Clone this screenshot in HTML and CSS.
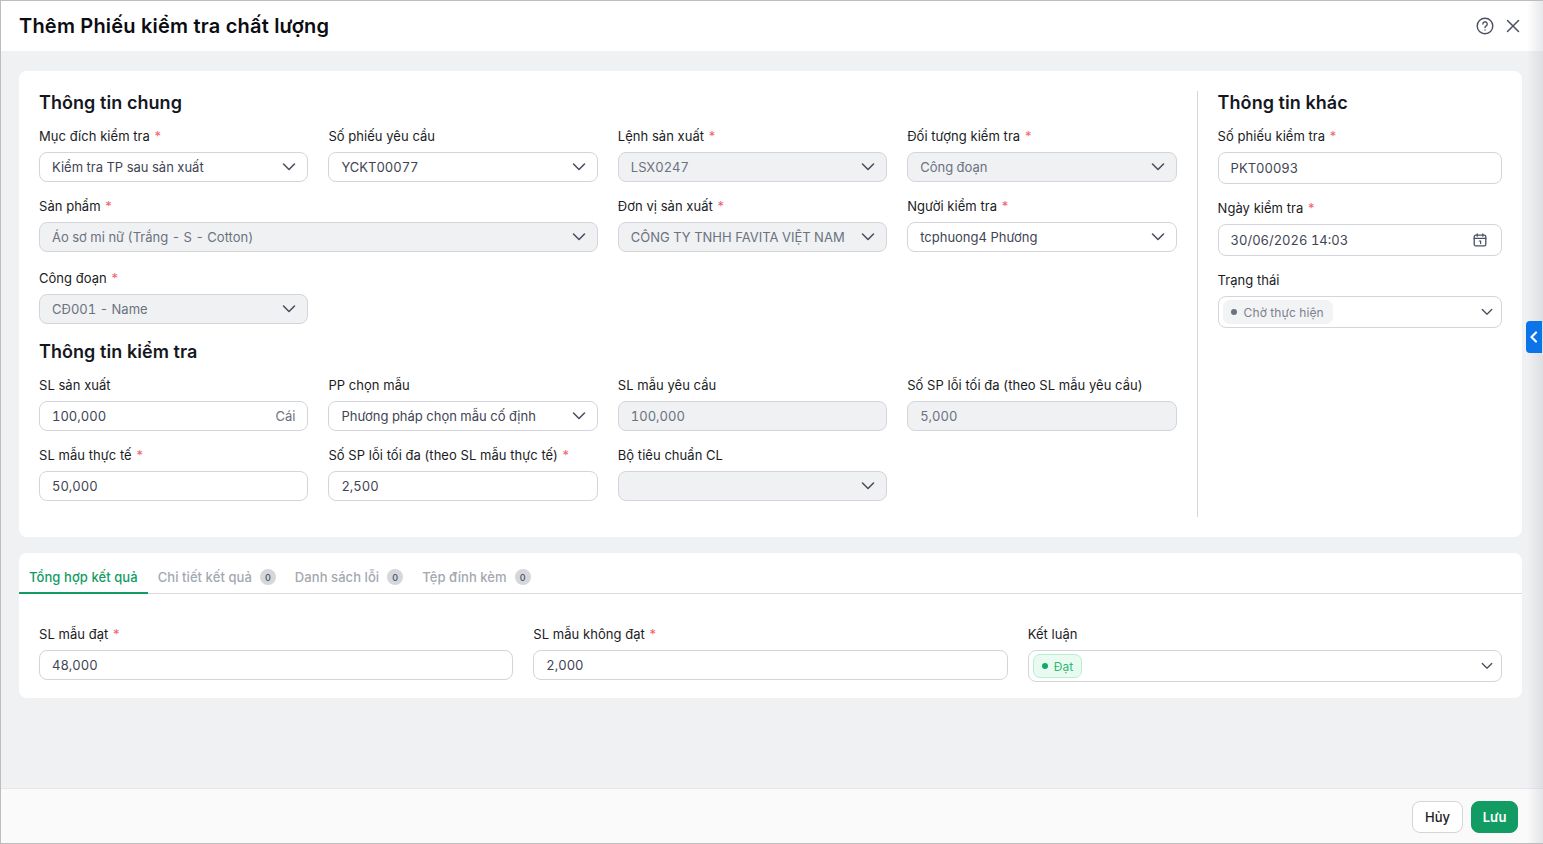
FILE: index.html
```html
<!DOCTYPE html>
<html lang="vi">
<head>
    <meta charset="UTF-8">
    <meta name="viewport" content="width=device-width, initial-scale=1.0">
    <title>Thêm Phiếu kiểm tra chất lượng</title>
    <link rel="stylesheet" href="styles.css">
</head>
<body>

<svg class="icon-defs" width="0" height="0">
    <symbol id="chev" viewBox="0 0 14 14"><path d="M1.5 4l5.5 5.5L12.5 4" fill="none" stroke="currentColor" stroke-width="1.6" stroke-linecap="round" stroke-linejoin="round"/></symbol>
</svg>

<div class="dialog">
    <header class="dialog-header">
        <h1>Thêm Phiếu kiểm tra chất lượng</h1>
        <div class="header-actions">
            <svg class="icon-help" width="18" height="18" viewBox="0 0 18 18" fill="none" stroke="currentColor" stroke-width="1.4" stroke-linecap="round">
                <circle cx="9" cy="9" r="7.8"/>
                <path d="M6.9 7a2.15 2.15 0 1 1 3.3 1.8c-.8.5-1.2.9-1.2 1.8"/>
                <path d="M9 13v.1"/>
            </svg>
            <svg class="icon-close" width="14" height="14" viewBox="0 0 14 14" fill="none" stroke="currentColor" stroke-width="1.5" stroke-linecap="round">
                <path d="M1.5 1.5l11 11M12.5 1.5l-11 11"/>
            </svg>
        </div>
    </header>

    <main class="dialog-body">
        <section class="card card-top">
            <div class="col-main">
                <h2>Thông tin chung</h2>
                <div class="grid-4">
                    <div class="field">
                        <label>Mục đích kiểm tra <em>*</em></label>
                        <div class="control select"><span>Kiểm tra TP sau sản xuất</span><svg class="chev"><use href="#chev"/></svg></div>
                    </div>
                    <div class="field">
                        <label>Số phiếu yêu cầu</label>
                        <div class="control select"><span>YCKT00077</span><svg class="chev"><use href="#chev"/></svg></div>
                    </div>
                    <div class="field">
                        <label>Lệnh sản xuất <em>*</em></label>
                        <div class="control select disabled"><span>LSX0247</span><svg class="chev"><use href="#chev"/></svg></div>
                    </div>
                    <div class="field">
                        <label>Đối tượng kiểm tra <em>*</em></label>
                        <div class="control select disabled"><span>Công đoạn</span><svg class="chev"><use href="#chev"/></svg></div>
                    </div>

                    <div class="field span-2 row-tall">
                        <label>Sản phẩm <em>*</em></label>
                        <div class="control select disabled"><span>Áo sơ mi nữ (Trắng - S - Cotton)</span><svg class="chev"><use href="#chev"/></svg></div>
                    </div>
                    <div class="field row-tall">
                        <label>Đơn vị sản xuất <em>*</em></label>
                        <div class="control select disabled"><span>CÔNG TY TNHH FAVITA VIỆT NAM</span><svg class="chev"><use href="#chev"/></svg></div>
                    </div>
                    <div class="field row-tall">
                        <label>Người kiểm tra <em>*</em></label>
                        <div class="control select"><span>tcphuong4 Phương</span><svg class="chev"><use href="#chev"/></svg></div>
                    </div>

                    <div class="field">
                        <label>Công đoạn <em>*</em></label>
                        <div class="control select disabled"><span>CĐ001 - Name</span><svg class="chev"><use href="#chev"/></svg></div>
                    </div>
                </div>

                <h2 class="h2-next">Thông tin kiểm tra</h2>
                <div class="grid-4">
                    <div class="field">
                        <label>SL sản xuất</label>
                        <div class="control"><span>100,000</span><span class="unit">Cái</span></div>
                    </div>
                    <div class="field">
                        <label>PP chọn mẫu</label>
                        <div class="control select"><span>Phương pháp chọn mẫu cố định</span><svg class="chev"><use href="#chev"/></svg></div>
                    </div>
                    <div class="field">
                        <label>SL mẫu yêu cầu</label>
                        <div class="control disabled"><span>100,000</span></div>
                    </div>
                    <div class="field">
                        <label>Số SP lỗi tối đa (theo SL mẫu yêu cầu)</label>
                        <div class="control disabled"><span>5,000</span></div>
                    </div>

                    <div class="field">
                        <label>SL mẫu thực tế <em>*</em></label>
                        <div class="control"><span>50,000</span></div>
                    </div>
                    <div class="field">
                        <label>Số SP lỗi tối đa (theo SL mẫu thực tế) <em>*</em></label>
                        <div class="control"><span>2,500</span></div>
                    </div>
                    <div class="field">
                        <label>Bộ tiêu chuẩn CL</label>
                        <div class="control select disabled"><span></span><svg class="chev"><use href="#chev"/></svg></div>
                    </div>
                </div>
            </div>

            <aside class="col-side">
                <h2>Thông tin khác</h2>
                <div class="field">
                    <label>Số phiếu kiểm tra <em>*</em></label>
                    <div class="control tall"><span>PKT00093</span></div>
                </div>
                <div class="field">
                    <label>Ngày kiểm tra <em>*</em></label>
                    <div class="control tall date">
                        <span>30/06/2026 14:03</span>
                        <svg class="icon-cal" width="14" height="14" viewBox="0 0 14 14" fill="none" stroke="currentColor" stroke-width="1.3" stroke-linecap="round">
                            <rect x="1.2" y="2.2" width="11.6" height="10.6" rx="1.6"/>
                            <path d="M1.2 5.4h11.6M4.2 1v2.2M9.8 1v2.2"/>
                            <path d="M6.2 8h1.4v2.6" stroke-width="1.2"/>
                        </svg>
                    </div>
                </div>
                <div class="field">
                    <label>Trạng thái</label>
                    <div class="control tall with-tag">
                        <span class="tag tag-grey"><i></i>Chờ thực hiện</span>
                        <svg class="chev"><use href="#chev"/></svg>
                    </div>
                </div>
            </aside>
        </section>

        <section class="card card-tabs">
            <nav class="tabs">
                <a class="tab active">Tổng hợp kết quả</a>
                <a class="tab">Chi tiết kết quả <b>0</b></a>
                <a class="tab">Danh sách lỗi <b>0</b></a>
                <a class="tab">Tệp đính kèm <b>0</b></a>
            </nav>
            <div class="grid-3">
                <div class="field">
                    <label>SL mẫu đạt <em>*</em></label>
                    <div class="control"><span>48,000</span></div>
                </div>
                <div class="field">
                    <label>SL mẫu không đạt <em>*</em></label>
                    <div class="control"><span>2,000</span></div>
                </div>
                <div class="field">
                    <label>Kết luận</label>
                    <div class="control tall with-tag">
                        <span class="tag tag-green"><i></i>Đạt</span>
                        <svg class="chev"><use href="#chev"/></svg>
                    </div>
                </div>
            </div>
        </section>
    </main>

    <footer class="dialog-footer">
        <button class="btn">Hủy</button>
        <button class="btn btn-primary">Lưu</button>
    </footer>

    <div class="edge-shadow"></div>
    <button class="side-toggle">
        <svg width="10" height="12" viewBox="0 0 10 12" fill="none" stroke="currentColor" stroke-width="2.2" stroke-linecap="round" stroke-linejoin="round"><path d="M7 1.5L2.5 6 7 10.5"/></svg>
    </button>
</div>

</body>
</html>
```

FILE: styles.css
```css
* {
    box-sizing: border-box;
}

body {
    margin: 0;
    font-family: Inter, 'Noto Sans', sans-serif;
    font-size: 13px;
    color: #1a1c24;
}

.icon-defs {
    position: absolute;
}

.dialog {
    position: relative;
    display: flex;
    flex-direction: column;
    height: 844px;
    overflow: hidden;
    border: 1px solid #bdbdbd;
    border-right: 0;
    background-color: #f0f1f3;
}

.dialog-header {
    display: flex;
    align-items: center;
    justify-content: space-between;
    height: 50px;
    padding: 0 23px 0 18px;
    background-color: white;
}

h1 {
    margin: 0;
    font-size: 20px;
    font-weight: 600;
    letter-spacing: 0.2px;
    color: #0c0d12;
}

.header-actions {
    display: flex;
    align-items: center;
    gap: 12px;
    color: #4b5160;
}

.dialog-body {
    flex: 1;
    padding: 20px 21px 0 18px;
}

.card {
    background-color: white;
    border-radius: 8px;
}

.card-top {
    display: flex;
    height: 466px;
    padding: 20px;
}

.card-tabs {
    margin-top: 16px;
}

.col-main {
    width: 1137.6px;
    flex: none;
}

.col-side {
    flex: 1;
    margin-left: 20px;
    padding-left: 20px;
    border-left: 1px solid #d5d7dc;
}

.col-side .field + .field {
    margin-top: 14px;
}

h2 {
    margin: 0 0 13px;
    height: 22px;
    line-height: 24px;
    font-size: 18px;
    font-weight: 600;
    letter-spacing: 0.06px;
    color: #15171f;
}

.h2-next {
    margin-top: 16px;
}

.grid-4 {
    display: grid;
    grid-template-columns: repeat(4, 1fr);
    gap: 14px 20px;
}

.grid-3 {
    display: grid;
    grid-template-columns: repeat(3, 1fr);
    gap: 20px;
    padding: 30px 20px 16px;
}

.span-2 {
    grid-column: span 2;
}

.row-tall {
    margin-bottom: 2px;
}

label {
    display: block;
    height: 20px;
    margin-bottom: 6px;
    line-height: 21px;
    font-size: 13px;
    letter-spacing: 0.04px;
    color: #1a1c24;
}

label em {
    margin-left: 1px;
    font-style: normal;
    color: #f0616d;
}

.control {
    display: flex;
    align-items: center;
    justify-content: space-between;
    height: 30px;
    padding: 0 12px;
    background-color: white;
    border: 1px solid #d3d5da;
    border-radius: 8px;
    font-size: 13px;
    font-feature-settings: "tnum";
    color: #3f4554;
    white-space: nowrap;
}

.control.select {
    padding-right: 11px;
}

.control.tall {
    height: 32px;
}

.control.date {
    padding-right: 14px;
}

.control.disabled {
    background-color: #f0f1f3;
    color: #6b7280;
}

.control.with-tag {
    padding: 0 8px 0 4px;
}

.with-tag .chev {
    width: 12px;
    height: 12px;
}

.unit {
    color: #6b7280;
}

.chev {
    width: 14px;
    height: 14px;
    flex: none;
    color: #4b5160;
}

.icon-cal {
    color: #4b5160;
}

.tag {
    display: inline-flex;
    align-items: center;
    height: 24px;
    padding: 0 9px 0 8px;
    border-radius: 7px;
    font-size: 12px;
    letter-spacing: 0.1px;
}

.tag i {
    width: 6px;
    height: 6px;
    margin-right: 7px;
    border-radius: 50%;
    background-color: currentColor;
}

.tag-grey {
    background-color: #f2f3f5;
    color: #7b818e;
}

.tag-grey i {
    background-color: #6b7280;
}

.tag-green {
    padding-right: 8px;
    background-color: #e9fbf1;
    border: 1px solid #b5f0cf;
    color: #2eb872;
}

.tag-green i {
    margin-right: 6px;
    background-color: #12a866;
}

.tabs {
    display: flex;
    height: 41px;
    border-bottom: 1px solid #d9dbe0;
}

.tab {
    display: flex;
    align-items: center;
    height: 41px;
    padding: 7px 9px 0 10px;
    font-size: 13px;
    font-weight: 500;
    letter-spacing: 0.07px;
    color: #a3a7b0;
}

.tab.active {
    padding-top: 8px;
    padding-right: 10px;
    border-bottom: 2px solid #129c63;
    color: #129c63;
}

.tab b {
    display: flex;
    align-items: center;
    justify-content: center;
    width: 16px;
    height: 16px;
    margin-left: 8px;
    border-radius: 50%;
    background-color: #d5d7dc;
    font-size: 9px;
    font-weight: 500;
    color: #4b5160;
}

.dialog-footer {
    display: flex;
    justify-content: flex-end;
    align-items: center;
    gap: 8px;
    height: 55px;
    padding: 2px 25px 0 0;
    background-color: #fafafa;
    border-top: 1px solid #e6e7ea;
}

.btn {
    height: 32px;
    padding: 0 12px;
    background-color: white;
    border: 1px solid #d3d5da;
    border-radius: 8px;
    font-family: inherit;
    font-size: 13px;
    font-weight: 500;
    color: #1a1c24;
}

.btn-primary {
    width: 47px;
    padding: 0;
    background-color: #129c63;
    border-color: #129c63;
    font-weight: 600;
    color: white;
}

.edge-shadow {
    position: absolute;
    top: 0;
    right: 0;
    bottom: 0;
    width: 16px;
    background: linear-gradient(to right, rgba(170, 174, 182, 0), rgba(170, 174, 182, 0.28));
    pointer-events: none;
}

.side-toggle {
    position: absolute;
    top: 320px;
    right: 1px;
    display: flex;
    align-items: center;
    justify-content: center;
    width: 16px;
    height: 32px;
    padding: 0;
    background-color: #0a74e8;
    border: none;
    border-radius: 4px 0 0 4px;
    color: white;
}
```
